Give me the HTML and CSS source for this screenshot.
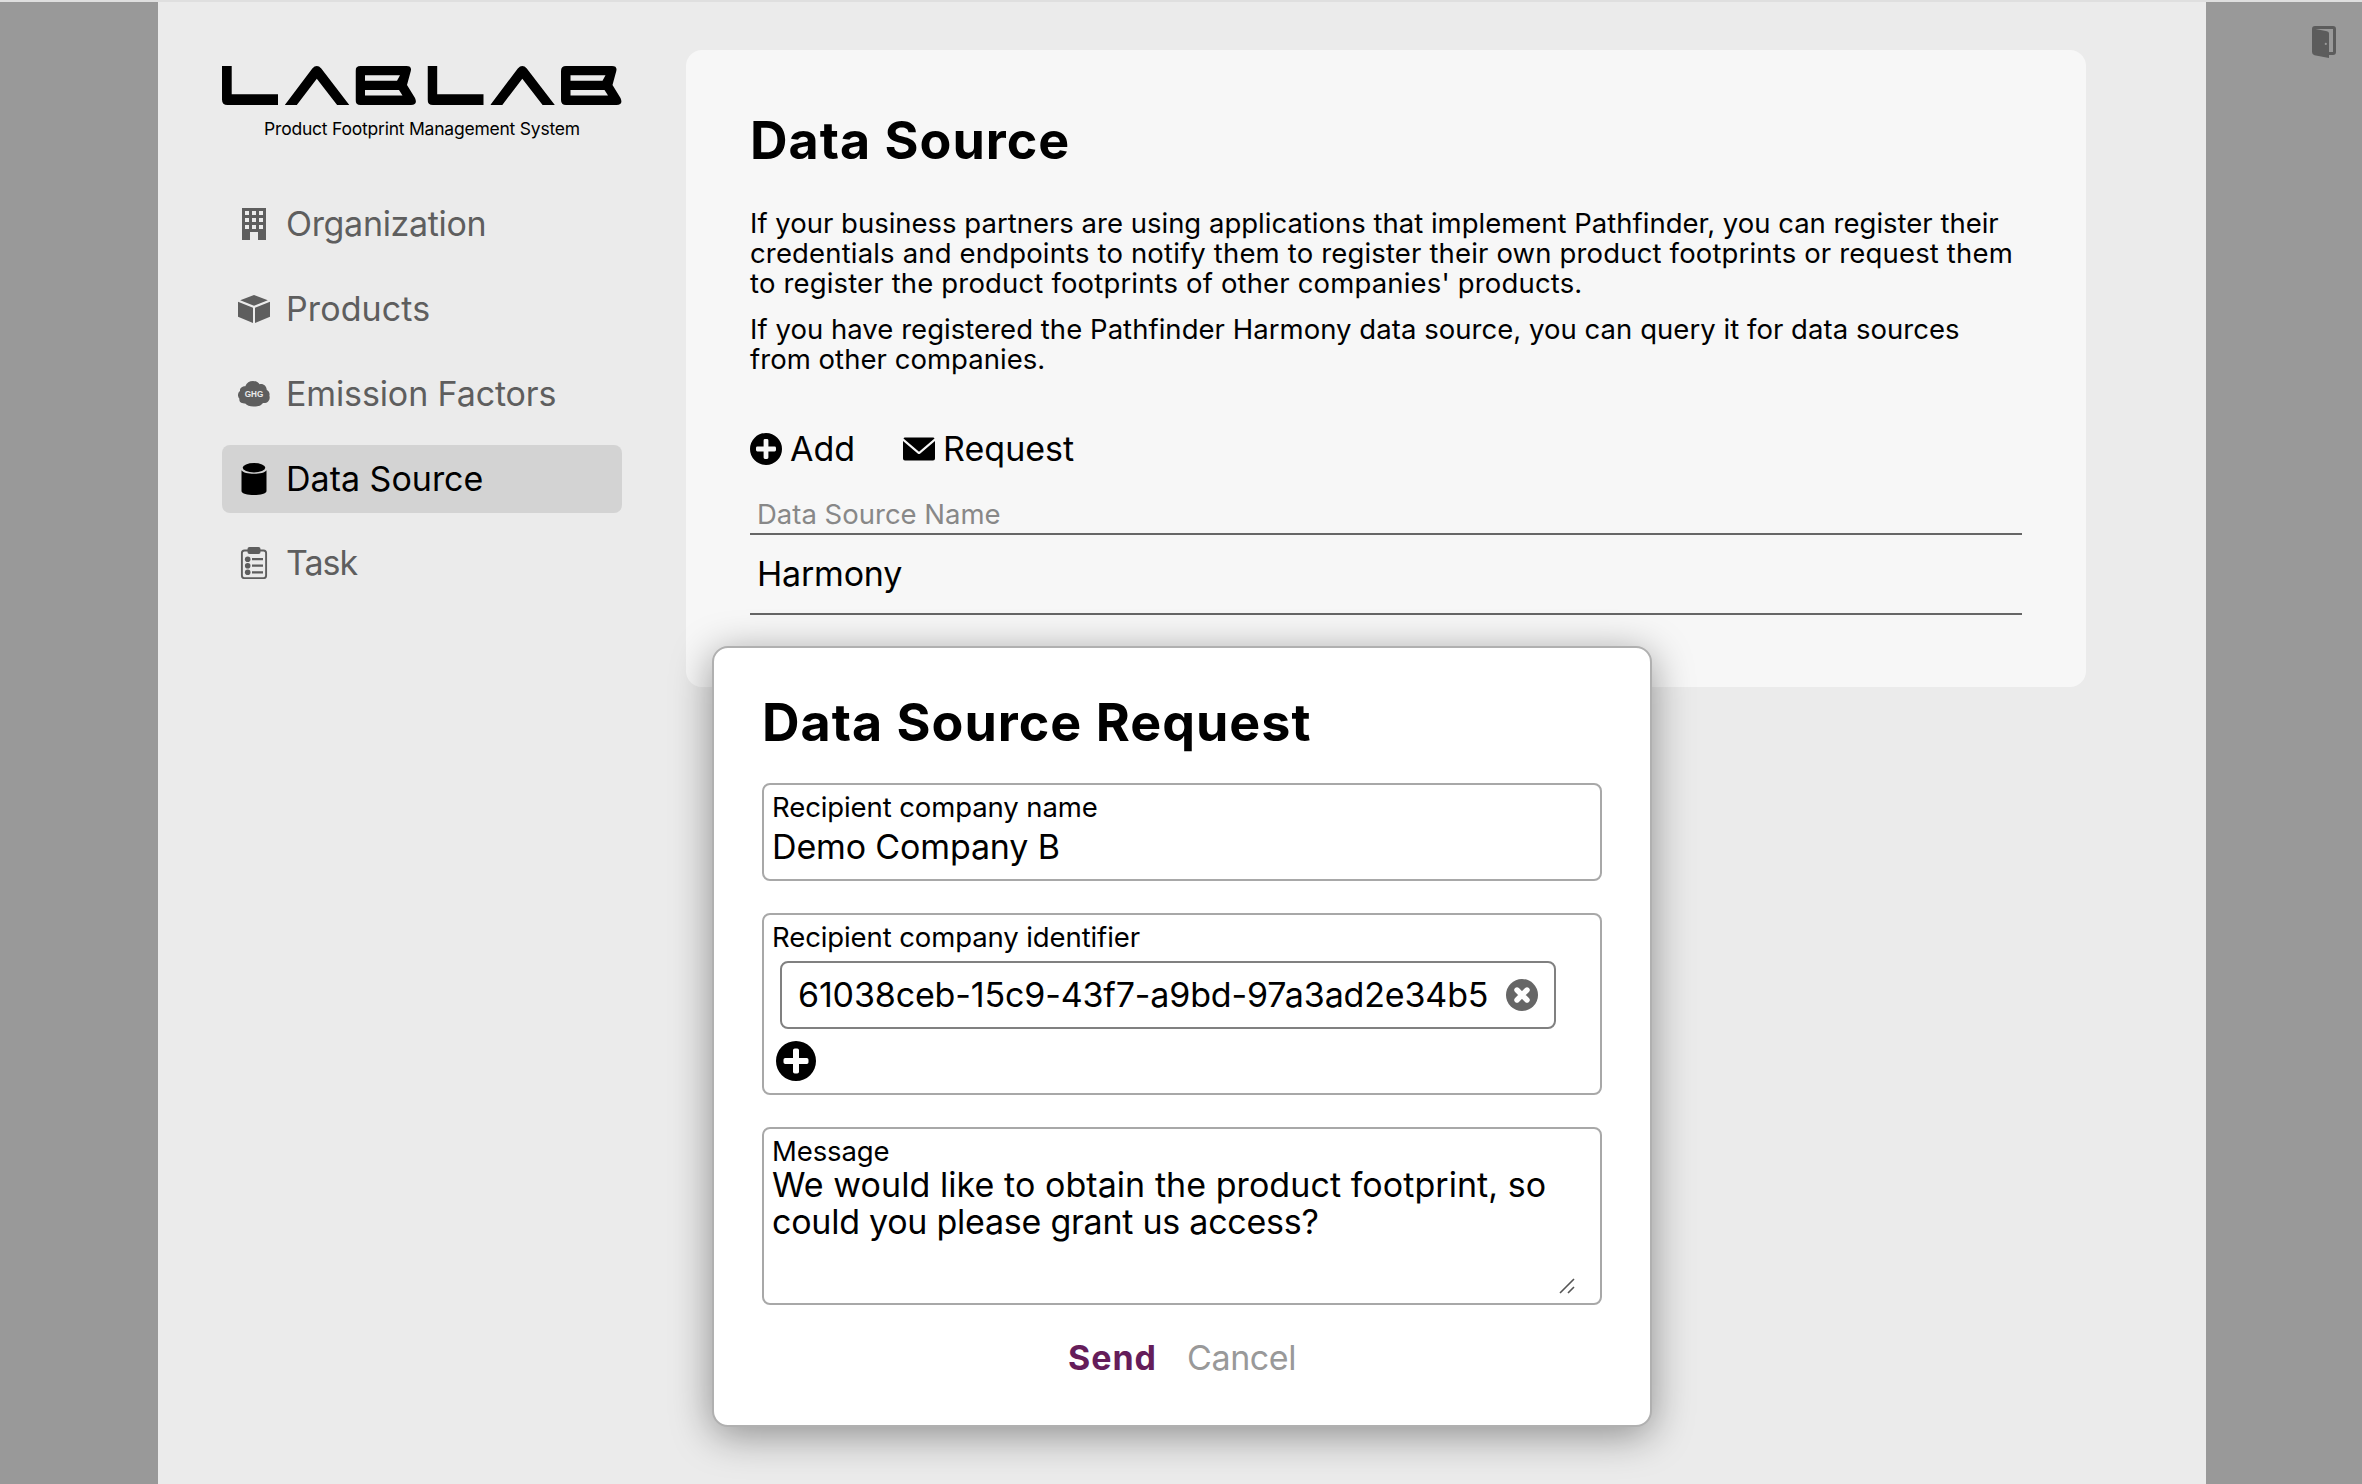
FILE: index.html
```html
<!DOCTYPE html>
<html lang="en">
<head>
<meta charset="utf-8">
<title>LABLAB - Data Source</title>
<link rel="stylesheet" href="styles.css">
</head>
<body>
<svg width="0" height="0" class="defs" aria-hidden="true">
  <symbol id="plus" viewBox="0 0 32 32">
    <path fill="currentColor" fill-rule="evenodd" d="M16 0a16 16 0 1 0 0 32a16 16 0 1 0 0-32zM15 6h2a1.4 1.4 0 0 1 1.400 1.400v6.200h6.200a1.400 1.400 0 0 1 1.400 1.400v2a1.400 1.400 0 0 1-1.400 1.400h-6.200v6.200a1.400 1.400 0 0 1-1.400 1.400h-2a1.400 1.400 0 0 1-1.400-1.400v-6.200h-6.200a1.400 1.400 0 0 1-1.400-1.400v-2a1.400 1.400 0 0 1 1.400-1.400h6.200v-6.200a1.400 1.400 0 0 1 1.400-1.400z"/>
  </symbol>
  <symbol id="logo-l" viewBox="0 0 57 39">
    <path d="M0 0h9.700v28.200H56V39H5.500Q0 39 0 33.500z"/>
  </symbol>
  <symbol id="logo-a" viewBox="0 0 65 39">
    <path d="M0 39 27.500 2.500Q32 -2.400 36.500 2.500L64.500 39H52.300L32 12.700 12 39z"/>
  </symbol>
  <symbol id="logo-b" viewBox="0 0 61 39">
    <path fill-rule="evenodd" d="M5 0H51Q56.500 0 55.300 5L51.500 19 59.500 32Q62.500 39 55.500 39H5Q0 39 0 34V5Q0 0 5 0zM9.500 9.200V14.800H41.500L44.500 9.200zM9.500 24V29.600H47L43.500 24z"/>
  </symbol>
</svg>
<div class="app">
  <div class="page">
    <aside class="sidebar">
      <svg class="logo" viewBox="0 0 400 39" role="img" aria-label="LABLAB">
        <use href="#logo-l" x="0" width="57" height="39"/>
        <use href="#logo-a" x="62.800" width="65" height="39"/>
        <use href="#logo-b" x="133.500" width="61" height="39"/>
        <use href="#logo-l" x="205.500" width="57" height="39"/>
        <use href="#logo-a" x="268.300" width="65" height="39"/>
        <use href="#logo-b" x="339" width="61" height="39"/>
      </svg>
      <div class="tagline">Product Footprint Management System</div>
      <nav class="nav">
        <a class="nav-item nav-organization">
          <svg class="icon" viewBox="0 0 32 32"><path fill="currentColor" fill-rule="evenodd" d="M4 0h24v32h-8v-8h-8v8H4zM7 3v4h4V3zM14 3v4h4V3zM21 3v4h4V3zM7 10v4h4v-4zM14 10v4h4v-4zM21 10v4h4v-4zM7 17v4h4v-4zM14 17v4h4v-4zM21 17v4h4v-4z"/></svg>
          <span>Organization</span>
        </a>
        <a class="nav-item nav-products">
          <svg class="icon" viewBox="0 0 32 32"><path fill="currentColor" d="M16 2 29.800 7.200 16 12.800 2.200 7.200zM0 8.800 15 14.800V30L0 23.800zM32 8.800 17 14.800V30L32 23.800z"/></svg>
          <span>Products</span>
        </a>
        <a class="nav-item nav-factors">
          <svg class="icon" viewBox="0 0 32 32"><path fill="currentColor" d="M7.300 8.300C8.500 4.800 11.500 3 15 3c3 0 5.200 1.300 6.600 3.200C25 5.300 28.500 7.500 28.800 12c2.200 1 3.200 3.500 2.600 5.500 1.200 4-1.400 8-6.400 7.500-2 2.500-4 3.500-9.500 3.500-4 0-6.500-1-8.300-3C2.500 25.800 1 23.500 1.400 20.800-.8 18.500-.3 14.500 2 13c-.3-2.800 2-4.700 5.300-4.700z"/><text class="ghg" x="16" y="18.800" textLength="18.500" lengthAdjust="spacingAndGlyphs">GHG</text></svg>
          <span>Emission Factors</span>
        </a>
        <a class="nav-item nav-source active">
          <svg class="icon" viewBox="0 0 32 32"><ellipse fill="currentColor" cx="16" cy="4.700" rx="11.300" ry="4.700"/><path fill="currentColor" d="M3.500 7.200C6 12 26 12 28.500 7.200V28C28.500 33.300 3.500 33.300 3.500 28z"/></svg>
          <span>Data Source</span>
        </a>
        <a class="nav-item nav-task">
          <svg class="icon" viewBox="0 0 32 32"><rect x="3.900" y="3.500" width="24.200" height="27.600" rx="2.600" fill="none" stroke="currentColor" stroke-width="1.900"/><g fill="currentColor"><rect x="9.500" y="0" width="13" height="7" rx="2"/><circle cx="9.700" cy="12.300" r="2.800"/><circle cx="9.700" cy="18.800" r="2.800"/><circle cx="9.700" cy="25.300" r="2.800"/><path d="M14 11h11v2.200H14zM14 17.600h11v2.200H14zM14 24.200h11v2.200H14z"/></g></svg>
          <span>Task</span>
        </a>
      </nav>
    </aside>
    <main class="panel">
      <h1 class="title">Data Source</h1>
      <p class="lead">If your business partners are using applications that implement Pathfinder, you can register their<br><span class="wide">credentials and endpoints to notify them to register their own product footprints or request them<br>to register the product footprints of other companies' products.</span></p>
      <p class="lead lead-harmony">If you have registered the Pathfinder Harmony data source, you can query it for data sources<br>from other companies.</p>
      <div class="toolbar">
        <a class="tool"><svg class="icon"><use href="#plus"/></svg>Add</a>
        <a class="tool"><svg class="icon" viewBox="0 0 32 32"><path fill="currentColor" d="M2 4.500h28a1.500 1.500 0 0 1 1.500 1L16 18.800.5 5.500A1.500 1.500 0 0 1 2 4.500zM0 8 14.700 20.500Q16 21.600 17.300 20.500L32 8V25.500a2 2 0 0 1-2 2H2a2 2 0 0 1-2-2z"/></svg>Request</a>
      </div>
      <div class="table-head">Data Source Name</div>
      <div class="table-row">Harmony</div>
    </main>
  </div>
  <div class="gutter">
    <svg class="icon logout" viewBox="0 0 32 32"><path fill="currentColor" fill-rule="evenodd" d="M7 0h18q3 0 3 3v23q0 3-3 3h-4v3L6.500 29.200Q4 28.600 4 26V3Q4 0 7 0zM7.500 3 19 5.200Q21 5.600 21 7.500V26h4V3zM17.800 16.800a1.100 1.100 0 1 0 0 2.200a1.100 1.100 0 1 0 0-2.200z"/></svg>
  </div>

  <section class="modal">
    <h2 class="title modal-title">Data Source Request</h2>
    <div class="field field-name">
      <div class="label">Recipient company name</div>
      <div class="value">Demo Company B</div>
    </div>
    <div class="field field-id">
      <div class="label">Recipient company identifier</div>
      <div class="chip">
        <span>61038ceb-15c9-43f7-a9bd-97a3ad2e34b5</span>
        <svg class="icon remove" viewBox="0 0 32 32"><circle cx="16" cy="16" r="16" fill="currentColor"/><path d="M11 11 21 21M21 11 11 21" stroke="#fff" stroke-width="5.400" stroke-linecap="round"/></svg>
      </div>
      <svg class="add-id"><use href="#plus"/></svg>
    </div>
    <div class="field field-message">
      <div class="label">Message</div>
      <div class="message"><span class="first-line">We would like to obtain the product footprint, so</span><br>could you please grant us access?
        <svg class="grip" viewBox="0 0 16 16"><path d="M1 15 15 1M9 15 15 9" stroke="#555" stroke-width="1.600" fill="none"/></svg>
      </div>
    </div>
    <div class="buttons">
      <a class="send">Send</a>
      <a class="cancel">Cancel</a>
    </div>
  </section>
</div>
</body>
</html>
```
FILE: styles.css
```css
* { box-sizing: border-box; }

body {
  margin: 0;
  background: #999;
  color: #000;
  font: 400 34px/40px Inter, "Liberation Sans", sans-serif;
  white-space: nowrap;
}

.defs { position: absolute; }

.app {
  position: relative;
  display: grid;
  grid-template-columns: 2048px 1fr;
  height: 1484px;
  padding-left: 158px;
  border-top: 2px solid #dfdfdf;
  overflow: hidden;
}

.page {
  display: flex;
  align-items: flex-start;
  gap: 64px;
  padding: 48px 64px 0;
  background: #ebebeb;
}

.icon {
  display: block;
  flex: none;
  width: 32px;
  height: 32px;
}

/* sidebar */
.sidebar { width: 400px; padding-top: 16px; }

.logo { display: block; width: 400px; height: 39px; }

.tagline {
  margin-top: 13px;
  font-size: 17.5px;
  line-height: 22px;
  letter-spacing: -.22px;
  text-align: center;
}

.nav {
  display: flex;
  flex-direction: column;
  gap: 17px;
  margin-top: 50px;
}

.nav-item {
  display: flex;
  align-items: center;
  gap: 16px;
  height: 68px;
  padding-left: 16px;
  border-radius: 8px;
  color: #5e5e5e;
}

.nav-item.active { background: #d3d3d3; color: #000; }
.nav-organization { letter-spacing: -.32px; }
.nav-products { letter-spacing: .1px; }
.nav-factors { letter-spacing: -.12px; }
.nav-task { height: 66px; letter-spacing: -1px; }

.ghg {
  fill: #ebebeb;
  font: 700 8.5px "Liberation Sans", sans-serif;
  letter-spacing: 0;
  text-anchor: middle;
}

/* main panel */
.panel {
  width: 1400px;
  height: 637px;
  padding: 61px 64px 0;
  border-radius: 16px;
  background: #f7f7f7;
}

.title {
  margin: 0 0 37px;
  font-size: 52px;
  line-height: 60px;
  font-weight: 700;
  letter-spacing: 1px;
}

.lead { margin: 0 0 16px; font-size: 27.5px; line-height: 30px; }
.lead-harmony { letter-spacing: .04px; }
.wide { letter-spacing: .16px; }

.toolbar { display: flex; gap: 48px; margin-top: 59px; }
.tool { display: flex; align-items: center; gap: 8px; height: 32px; }

.table-head {
  height: 39px;
  margin-top: 31px;
  padding-left: 7px;
  border-bottom: 2px solid #666;
  color: #888;
  font-size: 27.5px;
  line-height: 36px;
}

.table-row {
  height: 80px;
  padding-left: 7px;
  border-bottom: 2px solid #666;
  line-height: 78px;
  letter-spacing: -.2px;
}

.gutter { display: flex; justify-content: flex-end; padding: 24px 22px 0 0; }
.logout { color: #5c5c5c; }

/* request dialog */
.modal {
  position: absolute;
  top: 644px;
  left: 712px;
  width: 940px;
  height: 781px;
  padding: 45px 48px 0;
  border: 2px solid #b0b0b0;
  border-radius: 16px;
  background: #fff;
  box-shadow: 0 8px 40px rgba(0, 0, 0, .4);
}

.modal-title { margin-bottom: 30px; }

.field {
  margin-bottom: 32px;
  padding: 7px 24px 0 8px;
  border: 2px solid #a8a8a8;
  border-radius: 8px;
}

.field-name { height: 98px; }
.field-id { height: 182px; }
.field-message { height: 178px; margin-bottom: 33px; }

.label { font-size: 27.5px; line-height: 30px; letter-spacing: -.1px; }
.value { margin-top: 6px; line-height: 38px; letter-spacing: -.15px; }

.chip {
  display: flex;
  align-items: center;
  justify-content: space-between;
  width: 776px;
  height: 68px;
  margin: 9px 0 12px 8px;
  padding: 0 16px;
  border: 2px solid #808080;
  border-radius: 8px;
  letter-spacing: -.15px;
}

.remove { color: #666; }
.add-id { display: block; width: 40px; height: 40px; margin-left: 4px; }

.message { position: relative; height: 128px; line-height: 37px; letter-spacing: -.25px; }
.first-line { letter-spacing: .06px; }
.grip { position: absolute; right: 1px; bottom: 0; width: 16px; height: 16px; }

.buttons { display: flex; justify-content: center; gap: 30px; }
.send { color: #651d5a; font-weight: 700; letter-spacing: 1px; }
.cancel { color: #999; letter-spacing: -.4px; }
```
